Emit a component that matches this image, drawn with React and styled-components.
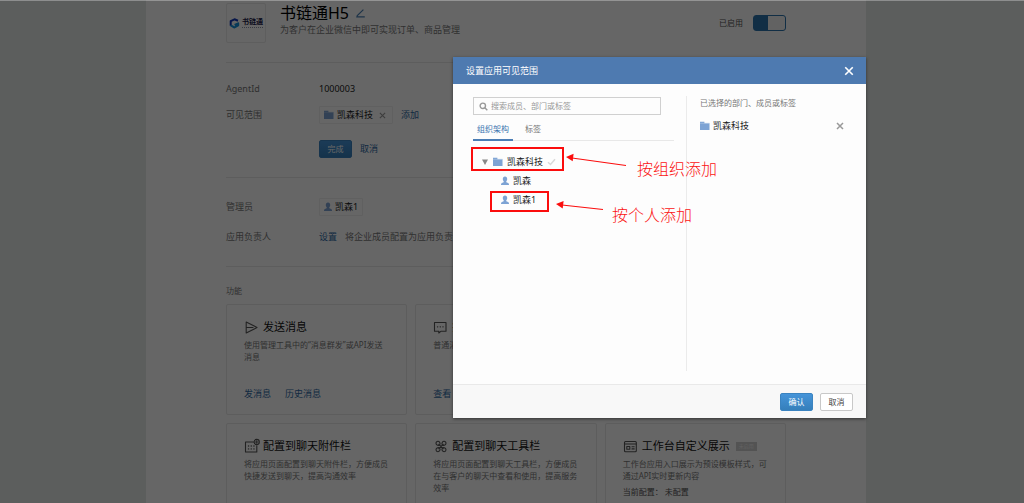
import React from "react";
import styled, { createGlobalStyle, css } from "styled-components";

const Global = createGlobalStyle`
  * { box-sizing: border-box; }
  body {
    margin: 0;
    background: #e6ece9;
    font-family: "Noto Sans", "Noto Sans CJK SC", sans-serif;
    font-size: 9px;
    line-height: 16px;
    color: #222;
  }
  h1, h2, h3, p, ul, dl, dd, dt { margin: 0; padding: 0; font: inherit; }
  ul { list-style: none; }
  button, input { font-family: inherit; margin: 0; }
  svg { display: block; flex: none; }
`;

const Page = styled.div`
  position: relative;
  height: 100vh;
  overflow: hidden;
  padding-right: 12px;
`;

const Panel = styled.main`
  max-width: 720px;
  min-height: 100vh;
  margin: 0 auto;
  padding: 3px 80px 0;
  background: #fff;
`;

const Header = styled.header`
  display: flex;
  align-items: flex-start;
  padding-bottom: 19px;
  border-bottom: 1px solid #e8e8e8;
`;

const LogoBox = styled.div`
  display: flex;
  align-items: center;
  justify-content: center;
  gap: 2px;
  width: 40px;
  height: 40px;
  border: 1px solid #ebebeb;
  border-radius: 2px;
`;

const LogoName = styled.span`
  color: #1b2048;
  font-size: 7px;
  font-weight: 700;
  line-height: 8px;
`;

const LogoTag = styled.span`
  display: block;
  height: 1px;
  margin-top: 1px;
  border-top: 1px dotted #8f93a8;
`;

const Heading = styled.div`
  flex: 1;
  margin-left: 14px;
`;

const Title = styled.h1`
  display: flex;
  align-items: center;
  gap: 5px;
  font-size: 16px;
  line-height: 20px;
  color: #000;
`;

const Subtitle = styled.p`
  line-height: 14px;
  color: #787878;
`;

const SwitchLabel = styled.label`
  display: flex;
  align-items: center;
  gap: 10px;
  margin-top: 12px;
  font-size: 8px;
  color: #555;
`;

const Switch = styled.input`
  appearance: none;
  width: 33px;
  height: 16px;
  border: 1px solid #2c74ad;
  border-radius: 3px;
  background: linear-gradient(90deg, #2c74ad 14px, #f6f6f6 14px);
`;

const Section = styled.dl`
  display: flex;
  flex-direction: column;
  gap: ${(p) => p.$gap}px;
  padding: ${(p) => p.$top}px 0 ${(p) => p.$bottom}px;
  border-bottom: 1px solid #e8e8e8;
`;

const Row = styled.div`
  display: flex;
  align-items: center;
  min-height: 16px;
`;

const ActionRow = styled(Row)`
  margin-top: 7px;
`;

const Label = styled.dt`
  width: 93px;
  color: #787878;
`;

const Value = styled.dd`
  flex: 1;
  display: flex;
  align-items: center;
  gap: 8px;
  white-space: nowrap;
`;

const Tag = styled.span`
  display: flex;
  align-items: center;
  gap: 3px;
  height: 18px;
  padding: 0 4px;
  border: 1px solid #f0f0f0;
  border-radius: 1px;
`;

const Link = styled.a`
  color: #2e69a3;
  text-decoration: none;
`;

const Hint = styled.span`
  color: #787878;
`;

const IconButton = styled.button`
  display: flex;
  align-items: center;
  justify-content: center;
  width: 12px;
  height: 12px;
  padding: 0;
  border: 0;
  background: none;
  color: ${(p) => p.$color || "#999"};
`;

const Button = styled.button`
  width: 33px;
  height: 18px;
  padding: 0;
  border: 1px solid #c8c8c8;
  border-radius: 2px;
  background: #fff;
  color: #444;
  font-size: 8px;
  line-height: 16px;
  ${(p) =>
    p.$primary &&
    css`
      border-color: #3a83c0;
      background: linear-gradient(#4594d9, #357fbb);
      color: #fff;
    `}
`;

const FeatureTitle = styled.h2`
  padding: 18px 0 7px;
  font-size: 8px;
  line-height: 12px;
  color: #787878;
`;

const Grid = styled.div`
  display: grid;
  grid-template-columns: repeat(3, 1fr);
  gap: 8px;
`;

const Card = styled.section`
  display: flex;
  flex-direction: column;
  min-height: 111px;
  padding: 14px 17px;
  border: 1px solid #e8e8e8;
  border-radius: 2px;
`;

const CardTitle = styled.h3`
  display: flex;
  align-items: center;
  gap: 3px;
  margin-bottom: 4px;
  font-size: 11px;
  color: #111;
  white-space: nowrap;
`;

const CardText = styled.p`
  font-size: 8px;
  line-height: 12px;
  color: #787878;
  & + & { margin-top: 4px; color: #555; }
`;

const CardLinks = styled.div`
  display: flex;
  gap: 14px;
  margin-top: auto;
  line-height: 12px;
`;

const Badge = styled.span`
  margin-left: 3px;
  padding: 0 3px;
  background: #cfcfcf;
  color: #f2f2f2;
  font-size: 5px;
  line-height: 9px;
`;

const Mask = styled.div`
  position: absolute;
  inset: 0;
  padding: 56px 12px 0 0;
  border-top: 1px solid rgba(255, 255, 255, 0.3);
  background: rgba(0, 0, 0, 0.6);
`;

const Stage = styled.div`
  display: flex;
  justify-content: flex-end;
  max-width: 720px;
  margin: 0 auto;
`;

const Dialog = styled.div`
  position: relative;
  width: 413px;
  background: #fdfdfd;
  box-shadow: 0 1px 3px rgba(0, 0, 0, 0.5);
`;

const DialogHeader = styled.header`
  display: flex;
  align-items: center;
  justify-content: space-between;
  height: 27px;
  padding: 0 11px 0 13px;
  background: #4e7ab0;
  color: #fff;
`;

const DialogBody = styled.div`
  display: flex;
  min-height: 300px;
  padding: 12px 20px 13px;
`;

const Left = styled.div`
  width: 214px;
  padding-right: 12px;
  border-right: 1px solid #ebebeb;
`;

const Right = styled.div`
  flex: 1;
  padding-left: 13px;
`;

const Search = styled.label`
  display: flex;
  align-items: center;
  gap: 3px;
  height: 18px;
  margin: 1px 13px 0 0;
  padding: 0 5px;
  border: 1px solid #d0d0d0;
  color: #888;
`;

const SearchInput = styled.input`
  flex: 1;
  min-width: 0;
  padding: 0;
  border: 0;
  outline: 0;
  background: none;
  font-size: 8px;
  line-height: 14px;
  &::placeholder { color: #999; }
`;

const Tabs = styled.div`
  display: flex;
  margin-top: 5px;
  border-bottom: 1px solid #e8e8e8;
`;

const Tab = styled.button`
  width: 40px;
  height: 21px;
  margin-bottom: -1px;
  padding: 0 0 2px;
  border: 0;
  border-bottom: 2px solid ${(p) => (p.$active ? "#4a7db5" : "transparent")};
  background: none;
  color: ${(p) => (p.$active ? "#3b75b0" : "#777")};
  font-size: 8px;
`;

const Tree = styled.ul`
  padding-top: 11px;
`;

const TreeItem = styled.li`
  display: flex;
  align-items: center;
  gap: 4px;
  height: 19px;
  padding-left: ${(p) => (p.$child ? 28 : 8)}px;
`;

const Caption = styled.p`
  font-size: 8px;
  line-height: 14px;
  color: #777;
`;

const Selected = styled.div`
  display: flex;
  align-items: center;
  gap: 3px;
  margin-top: 8px;
`;

const Spacer = styled.span`
  flex: 1;
`;

const DialogFooter = styled.footer`
  display: flex;
  justify-content: flex-end;
  gap: 7px;
  padding: 8px 13px 7px;
  border-top: 1px solid #e9e9e9;
  background: #f8f8f8;
`;

const Marks = styled.svg`
  position: absolute;
  left: 0;
  top: 0;
  pointer-events: none;
`;

const Note = styled.span`
  position: absolute;
  left: ${(p) => p.$x}px;
  top: ${(p) => p.$y}px;
  color: #fb1414;
  font-family: "Noto Sans CJK SC", sans-serif;
  font-size: 16px;
  font-weight: 300;
  line-height: 20px;
`;

const Folder = () => (
  <svg width="10" height="10" viewBox="0 0 10 10">
    <path d="M0 .8h4.400v1.400h5.100V9H0z" fill="#7da3d4" />
    <path d="M0 2.300h9.500" stroke="#b4cbe6" strokeWidth=".6" />
  </svg>
);

const Person = () => (
  <svg width="8" height="10" viewBox="0 0 8 10">
    <path d="M4 .5c1.500 0 2.200 1.100 2.200 2.400S5.500 5 5.200 5.500c-.2.800.4 1 1.300 1.300C7.500 7.100 8 7.700 8 9H0c0-1.300.5-1.900 1.500-2.200.9-.3 1.500-.5 1.300-1.300C2.500 5 1.800 4.200 1.800 2.900S2.500.5 4 .5z" fill="#7da3d4" />
  </svg>
);

const Cross = ({ size = 8, weight = 1.5 }) => (
  <svg width={size} height={size} viewBox="0 0 8 8" fill="none" stroke="currentColor" strokeWidth={weight}>
    <path d="M1 1l6 6M7 1L1 7" />
  </svg>
);

const Line = ({ children }) => (
  <svg width="16" height="16" viewBox="0 0 16 16" fill="none" stroke="#555" strokeWidth="1.100" strokeLinejoin="round" strokeLinecap="round">
    {children}
  </svg>
);

const SendIcon = () => (
  <Line>
    <path d="M2.200 3l10.800 5.500L2.200 14V3zM2.400 8.500h6.600" />
  </Line>
);

const ChatIcon = () => (
  <Line>
    <path d="M1.500 3.500h11.500v8.800H7.800L5.800 14V12.300H1.500z" />
    <path d="M4.500 7.800h.2M7.200 7.800h.2M9.900 7.800h.2" strokeWidth="1.300" />
  </Line>
);

const CalendarIcon = () => (
  <Line>
    <path d="M9.500 4H1.500v10h11.300V7.800" />
    <path d="M4.500 8h.1M7.200 8h.1M9.900 8h.1M4.500 10.900h.1M7.200 10.900h.1M9.900 10.900h.1" strokeWidth="1.400" />
    <circle cx="12.700" cy="4" r="2.600" />
    <path d="M12.700 2.600v2.800M11.300 4h2.800" strokeWidth=".9" />
  </Line>
);

const PetalIcon = () => (
  <Line>
    <path d="M5.800 6.300l4.400 4.400M10.200 6.300l-4.400 4.400" />
    <path d="M6.600 7.100C7.800 5 6.400 3.300 4.900 3.300A1.900 1.900 0 0 0 3 5.200c0 1.500 1.700 2.600 3.600 1.900zM9.400 7.100C8.200 5 9.600 3.300 11.100 3.300A1.900 1.900 0 0 1 13 5.200c0 1.500-1.700 2.600-3.600 1.900zM6.600 9.900c1.200 2.100-.2 3.800-1.700 3.800A1.900 1.900 0 0 1 3 11.800c0-1.500 1.700-2.600 3.600-1.900zM9.400 9.900c-1.200 2.100.2 3.800 1.700 3.800a1.900 1.900 0 0 0 1.900-1.900c0-1.500-1.700-2.600-3.600-1.900z" />
  </Line>
);

const BoardIcon = () => (
  <Line>
    <rect x="1.500" y="3.500" width="11.800" height="10.300" rx="1" />
    <path d="M1.500 6h11.800M9 8.800h2.200M9 10.900h2.200" />
    <rect x="3.800" y="8.500" width="3" height="2.700" />
  </Line>
);

const LogoMark = () => (
  <svg width="11" height="11" viewBox="0 0 11 11" fill="none">
    <path d="M9 2.700L5.500 1.300 1.700 3.200v4.600" stroke="#1238b8" strokeWidth="2" strokeLinejoin="round" />
    <path d="M1.700 7.400l3.800 2.100 3.700-2.200V5.300L5.600 7" stroke="#1492dc" strokeWidth="2" strokeLinejoin="round" />
  </svg>
);

const EditIcon = () => (
  <svg width="9" height="9" viewBox="0 0 9 9" fill="none" stroke="#4a80b4" strokeWidth="1.200">
    <path d="M7.400.6L1.300 6.500.9 7.900H8.800" />
  </svg>
);

const SearchIcon = () => (
  <svg width="9" height="9" viewBox="0 0 9 9" fill="none" stroke="#999" strokeWidth="1.400">
    <circle cx="3.800" cy="3.800" r="2.700" />
    <path d="M5.800 5.800L8.300 8.300" />
  </svg>
);

const Caret = () => (
  <svg width="8" height="8" viewBox="0 0 8 8">
    <path d="M1 1.500h6L4 7z" fill="#888" />
  </svg>
);

const Check = () => (
  <svg width="9" height="8" viewBox="0 0 9 8" fill="none" stroke="#d9d9d9" strokeWidth="1.500">
    <path d="M1 4.200l2.500 2.300L8 1.200" />
  </svg>
);

function AppDetails() {
  return (
    <Panel>
      <Header>
        <LogoBox>
          <LogoMark />
          <LogoName>
            书链通
            <LogoTag />
          </LogoName>
        </LogoBox>
        <Heading>
          <Title>
            书链通H5
            <IconButton aria-label="编辑">
              <EditIcon />
            </IconButton>
          </Title>
          <Subtitle>为客户在企业微信中即可实现订单、商品管理</Subtitle>
        </Heading>
        <SwitchLabel>
          已启用
          <Switch type="checkbox" defaultChecked />
        </SwitchLabel>
      </Header>

      <Section $gap={9} $top={18} $bottom={19}>
        <Row>
          <Label>AgentId</Label>
          <Value>1000003</Value>
        </Row>
        <Row>
          <Label>可见范围</Label>
          <Value>
            <Tag>
              <Folder />
              凯森科技
              <IconButton aria-label="移除">
                <Cross size={7} weight={1.3} />
              </IconButton>
            </Tag>
            <Link href="#add">添加</Link>
          </Value>
        </Row>
        <ActionRow>
          <Label />
          <Value>
            <Button $primary>完成</Button>
            <Link href="#cancel">取消</Link>
          </Value>
        </ActionRow>
      </Section>

      <Section $gap={13} $top={20} $bottom={21}>
        <Row>
          <Label>管理员</Label>
          <Value>
            <Tag>
              <Person />
              凯森1
            </Tag>
          </Value>
        </Row>
        <Row>
          <Label>应用负责人</Label>
          <Value>
            <Link href="#owner">设置</Link>
            <Hint>将企业成员配置为应用负责人</Hint>
          </Value>
        </Row>
      </Section>

      <FeatureTitle>功能</FeatureTitle>
      <Grid>
        <Card>
          <CardTitle><SendIcon />发送消息</CardTitle>
          <CardText>使用管理工具中的“消息群发”或API发送消息</CardText>
          <CardLinks>
            <Link href="#send">发消息</Link>
            <Link href="#history">历史消息</Link>
          </CardLinks>
        </Card>
        <Card>
          <CardTitle><ChatIcon />接收消息</CardTitle>
          <CardText>普通消息</CardText>
          <CardLinks>
            <Link href="#view">查看</Link>
          </CardLinks>
        </Card>
        <Card />
        <Card>
          <CardTitle><CalendarIcon />配置到聊天附件栏</CardTitle>
          <CardText>将应用页面配置到聊天附件栏，方便成员快捷发送到聊天，提高沟通效率</CardText>
        </Card>
        <Card>
          <CardTitle><PetalIcon />配置到聊天工具栏</CardTitle>
          <CardText>将应用页面配置到聊天工具栏，方便成员在与客户的聊天中查看和使用，提高服务效率</CardText>
        </Card>
        <Card>
          <CardTitle>
            <BoardIcon />工作台自定义展示
            <Badge>未启用</Badge>
          </CardTitle>
          <CardText>工作台应用入口展示为预设模板样式，可通过API实时更新内容</CardText>
          <CardText>当前配置： 未配置</CardText>
        </Card>
      </Grid>
    </Panel>
  );
}

function Annotations() {
  return (
    <>
      <Marks width="413" height="361" viewBox="0 0 413 361" fill="none" stroke="#fb0d0d">
        <rect x="19" y="91" width="91" height="22" strokeWidth="2" />
        <rect x="38" y="135" width="57" height="19" strokeWidth="2" />
        <path d="M173 108.500L119 101M150 152.500L109 148" strokeWidth="1.200" />
        <path d="M113 99.900l7.600-3.200-.9 7.600zM103 147.100l7.600-3.200-.9 7.600z" fill="#fb0d0d" stroke="none" />
      </Marks>
      <Note $x={184} $y={101}>按组织添加</Note>
      <Note $x={159} $y={147}>按个人添加</Note>
    </>
  );
}

function ScopeDialog() {
  return (
    <Dialog role="dialog" aria-label="设置应用可见范围">
      <DialogHeader>
        设置应用可见范围
        <IconButton $color="#fff" aria-label="关闭">
          <Cross size={10} weight={1.3} />
        </IconButton>
      </DialogHeader>
      <DialogBody>
        <Left>
          <Search>
            <SearchIcon />
            <SearchInput aria-label="搜索" placeholder="搜索成员、部门或标签" />
          </Search>
          <Tabs>
            <Tab $active>组织架构</Tab>
            <Tab>标签</Tab>
          </Tabs>
          <Tree>
            <TreeItem><Caret /><Folder />凯森科技<Check /></TreeItem>
            <TreeItem $child><Person />凯森</TreeItem>
            <TreeItem $child><Person />凯森1</TreeItem>
          </Tree>
        </Left>
        <Right>
          <Caption>已选择的部门、成员或标签</Caption>
          <Selected>
            <Folder />
            凯森科技
            <Spacer />
            <IconButton aria-label="移除">
              <Cross />
            </IconButton>
          </Selected>
        </Right>
      </DialogBody>
      <DialogFooter>
        <Button $primary>确认</Button>
        <Button>取消</Button>
      </DialogFooter>
      <Annotations />
    </Dialog>
  );
}

export default function App() {
  return (
    <>
      <Global />
      <Page>
        <AppDetails />
        <Mask>
          <Stage>
            <ScopeDialog />
          </Stage>
        </Mask>
      </Page>
    </>
  );
}
